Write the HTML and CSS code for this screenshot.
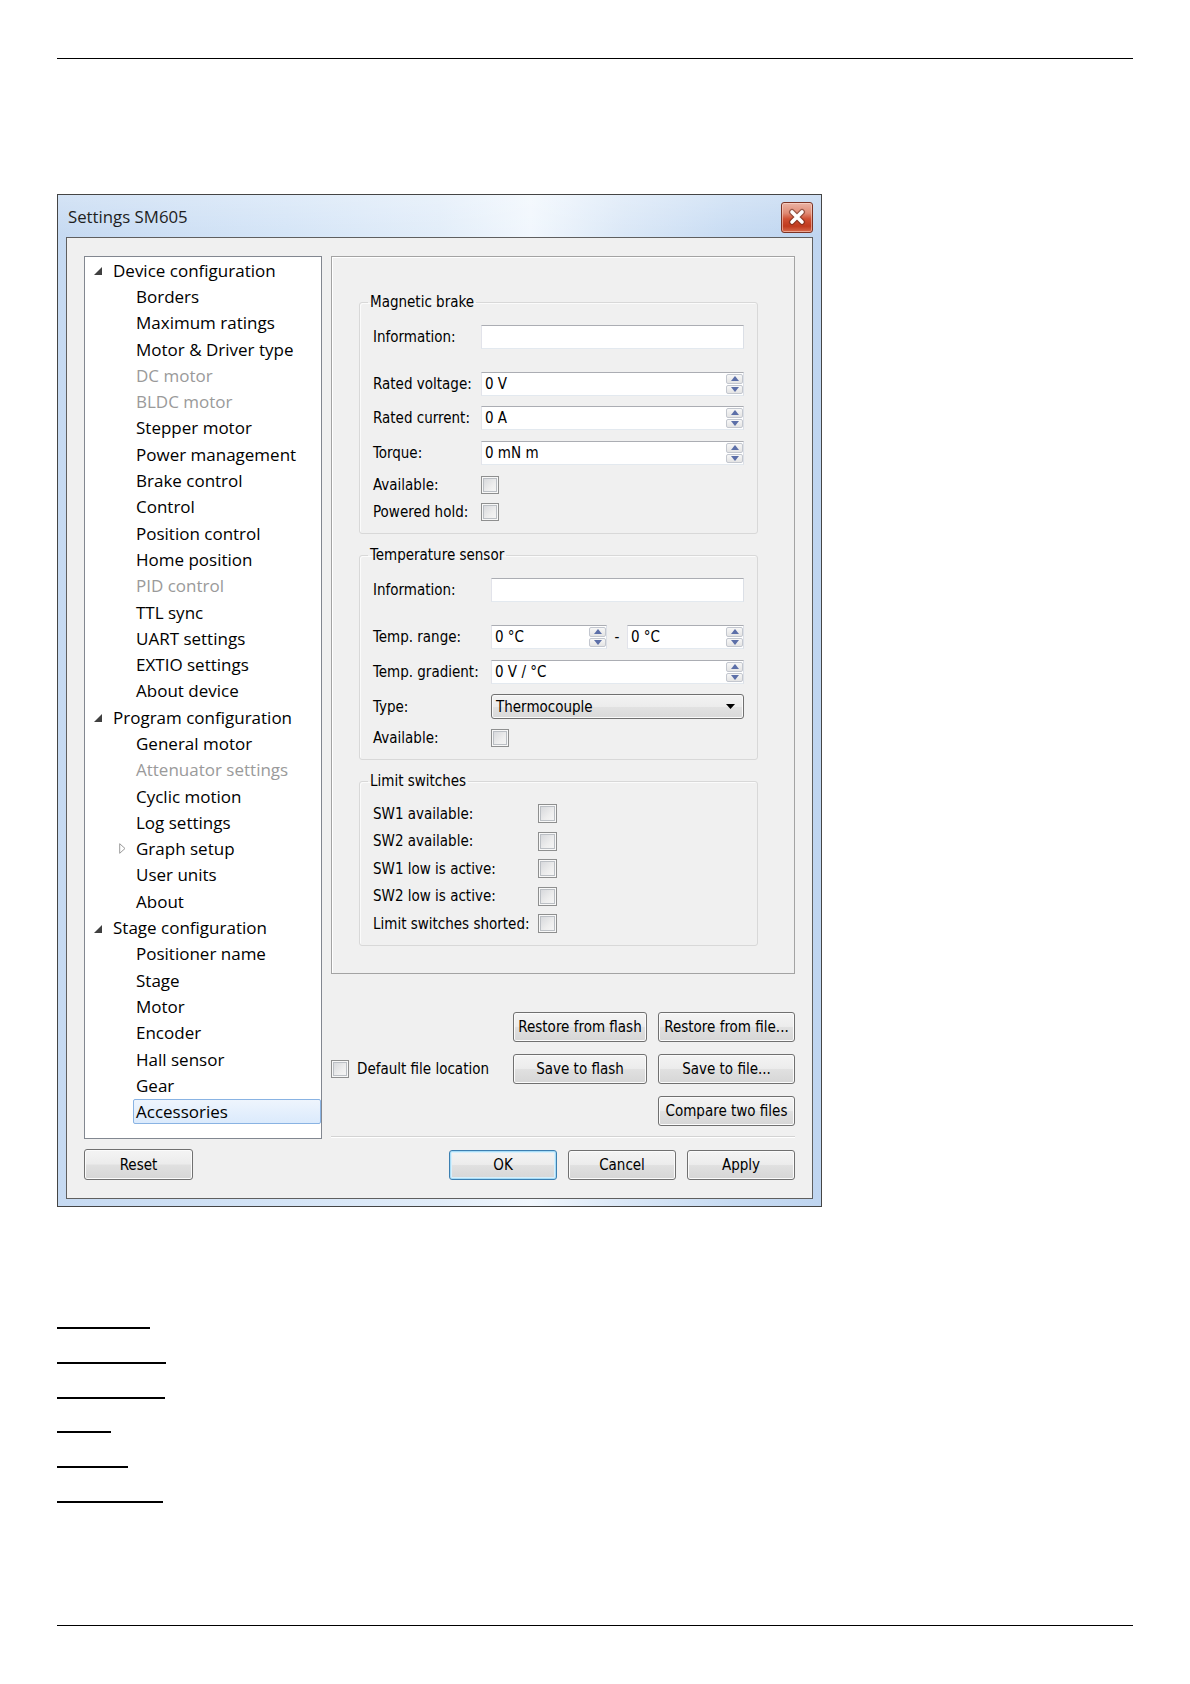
FILE: index.html
```html
<!DOCTYPE html>
<html>
<head>
<meta charset="utf-8">
<title>Settings SM605</title>
<link rel="stylesheet" href="styles.css">
</head>
<body>
<div class="page">
  <div class="rule rule-top"></div>

  <div class="dialog">
    <div class="titlebar">
      <span class="title">Settings SM605</span>
      <div class="close">
        <svg width="30" height="29" viewBox="0 0 30 29">
          <path d="M10 9 L20 19 M20 9 L10 19" stroke="#5a2418" stroke-width="6" stroke-linecap="round" fill="none" opacity="0.55"/>
          <path d="M10 9 L20 19 M20 9 L10 19" stroke="#ffffff" stroke-width="3.6" stroke-linecap="round" fill="none"/>
        </svg>
      </div>
    </div>

    <div class="frame">
      <div class="col-left">
        <div class="tree">
          <div class="ti top"><svg class="exp" width="8" height="8" viewBox="0 0 8 8"><polygon points="8,0 8,8 0,8" fill="#404040"/></svg><span>Device configuration</span></div>
          <div class="ti child">Borders</div>
          <div class="ti child">Maximum ratings</div>
          <div class="ti child">Motor &amp; Driver type</div>
          <div class="ti child dis">DC motor</div>
          <div class="ti child dis">BLDC motor</div>
          <div class="ti child">Stepper motor</div>
          <div class="ti child">Power management</div>
          <div class="ti child">Brake control</div>
          <div class="ti child">Control</div>
          <div class="ti child">Position control</div>
          <div class="ti child">Home position</div>
          <div class="ti child dis">PID control</div>
          <div class="ti child">TTL sync</div>
          <div class="ti child">UART settings</div>
          <div class="ti child">EXTIO settings</div>
          <div class="ti child">About device</div>
          <div class="ti top"><svg class="exp" width="8" height="8" viewBox="0 0 8 8"><polygon points="8,0 8,8 0,8" fill="#404040"/></svg><span>Program configuration</span></div>
          <div class="ti child">General motor</div>
          <div class="ti child dis">Attenuator settings</div>
          <div class="ti child">Cyclic motion</div>
          <div class="ti child">Log settings</div>
          <div class="ti child collapsed"><svg class="col" width="7" height="11" viewBox="0 0 7 11"><polygon points="0.7,0.7 6,5.5 0.7,10.3" fill="#fff" stroke="#9a9a9a" stroke-width="1"/></svg><span>Graph setup</span></div>
          <div class="ti child">User units</div>
          <div class="ti child">About</div>
          <div class="ti top"><svg class="exp" width="8" height="8" viewBox="0 0 8 8"><polygon points="8,0 8,8 0,8" fill="#404040"/></svg><span>Stage configuration</span></div>
          <div class="ti child">Positioner name</div>
          <div class="ti child">Stage</div>
          <div class="ti child">Motor</div>
          <div class="ti child">Encoder</div>
          <div class="ti child">Hall sensor</div>
          <div class="ti child">Gear</div>
          <div class="ti child sel"><span class="hl">Accessories</span></div>
        </div>
        <div class="btn reset">Reset</div>
      </div>

      <div class="col-right">
        <div class="panel">
          <fieldset class="group g-mag">
            <legend>Magnetic brake</legend>
            <div class="gbody">
              <div class="row r-info"><span class="lbl">Information:</span><div class="field"></div></div>
              <div class="row r-spin r-first"><span class="lbl">Rated voltage:</span><div class="field"><span class="val">0 V</span><div class="spin"><div class="sb"><svg width="8" height="5" viewBox="0 0 8 5"><polygon points="4,0 8,5 0,5" fill="#5c6fa8"/></svg></div><div class="sb"><svg width="8" height="5" viewBox="0 0 8 5"><polygon points="0,0 8,0 4,5" fill="#5c6fa8"/></svg></div></div></div></div>
              <div class="row r-spin"><span class="lbl">Rated current:</span><div class="field"><span class="val">0 A</span><div class="spin"><div class="sb"><svg width="8" height="5" viewBox="0 0 8 5"><polygon points="4,0 8,5 0,5" fill="#5c6fa8"/></svg></div><div class="sb"><svg width="8" height="5" viewBox="0 0 8 5"><polygon points="0,0 8,0 4,5" fill="#5c6fa8"/></svg></div></div></div></div>
              <div class="row r-spin"><span class="lbl">Torque:</span><div class="field"><span class="val">0 mN m</span><div class="spin"><div class="sb"><svg width="8" height="5" viewBox="0 0 8 5"><polygon points="4,0 8,5 0,5" fill="#5c6fa8"/></svg></div><div class="sb"><svg width="8" height="5" viewBox="0 0 8 5"><polygon points="0,0 8,0 4,5" fill="#5c6fa8"/></svg></div></div></div></div>
              <div class="row r-check"><span class="lbl">Available:</span><div class="cb"></div></div>
              <div class="row r-check r-check2"><span class="lbl">Powered hold:</span><div class="cb"></div></div>
            </div>
          </fieldset>

          <fieldset class="group g-temp">
            <legend>Temperature sensor</legend>
            <div class="gbody">
              <div class="row r-info"><span class="lbl">Information:</span><div class="field"></div></div>
              <div class="row r-spin r-first"><span class="lbl">Temp. range:</span>
                <div class="field f-range"><span class="val">0 °C</span><div class="spin"><div class="sb"><svg width="8" height="5" viewBox="0 0 8 5"><polygon points="4,0 8,5 0,5" fill="#5c6fa8"/></svg></div><div class="sb"><svg width="8" height="5" viewBox="0 0 8 5"><polygon points="0,0 8,0 4,5" fill="#5c6fa8"/></svg></div></div></div>
                <span class="dash">-</span>
                <div class="field"><span class="val">0 °C</span><div class="spin"><div class="sb"><svg width="8" height="5" viewBox="0 0 8 5"><polygon points="4,0 8,5 0,5" fill="#5c6fa8"/></svg></div><div class="sb"><svg width="8" height="5" viewBox="0 0 8 5"><polygon points="0,0 8,0 4,5" fill="#5c6fa8"/></svg></div></div></div>
              </div>
              <div class="row r-spin"><span class="lbl">Temp. gradient:</span><div class="field"><span class="val">0 V / °C</span><div class="spin"><div class="sb"><svg width="8" height="5" viewBox="0 0 8 5"><polygon points="4,0 8,5 0,5" fill="#5c6fa8"/></svg></div><div class="sb"><svg width="8" height="5" viewBox="0 0 8 5"><polygon points="0,0 8,0 4,5" fill="#5c6fa8"/></svg></div></div></div></div>
              <div class="row r-combo"><span class="lbl">Type:</span><div class="combo"><span class="val">Thermocouple</span><svg width="9" height="5" viewBox="0 0 9 5"><polygon points="0,0 9,0 4.5,5" fill="#000"/></svg></div></div>
              <div class="row r-check"><span class="lbl">Available:</span><div class="cb"></div></div>
            </div>
          </fieldset>

          <fieldset class="group g-limit">
            <legend>Limit switches</legend>
            <div class="gbody">
              <div class="row r-sw"><span class="lbl">SW1 available:</span><div class="cb"></div></div>
              <div class="row r-sw"><span class="lbl">SW2 available:</span><div class="cb"></div></div>
              <div class="row r-sw"><span class="lbl">SW1 low is active:</span><div class="cb"></div></div>
              <div class="row r-sw"><span class="lbl">SW2 low is active:</span><div class="cb"></div></div>
              <div class="row r-sw"><span class="lbl">Limit switches shorted:</span><div class="cb"></div></div>
            </div>
          </fieldset>
        </div>

        <div class="file-grid">
          <div class="empty"></div>
          <div class="btn">Restore from flash</div>
          <div class="btn">Restore from file...</div>
          <div class="defloc"><div class="cb"></div><span>Default file location</span></div>
          <div class="btn">Save to flash</div>
          <div class="btn">Save to file...</div>
          <div class="empty"></div>
          <div class="empty"></div>
          <div class="btn">Compare two files</div>
        </div>

        <div class="sep"></div>

        <div class="dlg-buttons">
          <div class="btn wide default">OK</div>
          <div class="btn wide">Cancel</div>
          <div class="btn wide">Apply</div>
        </div>
      </div>
    </div>
  </div>

  <div class="links">
    <div class="uline" style="width:93px"></div>
    <div class="uline" style="width:109px"></div>
    <div class="uline" style="width:108px"></div>
    <div class="uline" style="width:54px"></div>
    <div class="uline" style="width:71px"></div>
    <div class="uline" style="width:106px"></div>
  </div>

  <div class="rule rule-bottom"></div>
</div>
</body>
</html>
```

FILE: styles.css
```css
* { box-sizing: border-box; }

html, body {
  margin: 0;
  padding: 0;
  background: #ffffff;
}

.page {
  width: 1190px;
  height: 1684px;
  overflow: hidden;
  padding-top: 58px;
  font-family: "DejaVu Sans Condensed", "DejaVu Sans", sans-serif;
  font-stretch: semi-condensed;
  font-size: 15px;
  color: #000;
}

.rule {
  margin: 0 57px;
  height: 1px;
  background: #000;
}

.rule-bottom {
  margin-top: 122px;
}

/* ---------- dialog ---------- */

.dialog {
  margin: 135px 0 0 57px;
  width: 765px;
  height: 1013px;
  border: 1px solid #454545;
  background:
    linear-gradient(to bottom, rgba(255,255,255,0.25), rgba(255,255,255,0) 40px),
    linear-gradient(to right, #c6daf2 0%, #d5e5f7 30%, #e2edf9 50%, #f1f7fd 62%, #dbe8f7 74%, #c8dcf3 88%, #bfd5f0 100%);
  display: flex;
  flex-direction: column;
}

.titlebar {
  height: 42px;
  flex: none;
  display: flex;
  align-items: center;
  justify-content: space-between;
  padding: 0 8px 0 10px;
}

.title {
  font-family: "Open Sans", "Noto Sans", sans-serif;
  font-stretch: normal;
  font-size: 16.8px;
  color: #1e1e1e;
  margin-top: 1px;
}

.close {
  width: 32px;
  height: 31px;
  margin-top: 3px;
  border: 1px solid #7b3325;
  border-radius: 3px;
  background: linear-gradient(to bottom, #eab3a5 0%, #e08a74 35%, #cf4f33 55%, #c03a1e 80%, #d86a4c 100%);
  box-shadow: inset 0 0 0 1px rgba(255,220,210,0.55);
  display: flex;
  align-items: center;
  justify-content: center;
}

.frame {
  margin: 0 8px;
  height: 962px;
  border: 1px solid #5f5f5f;
  background: #f0f0f0;
  padding: 18px 17px;
  display: flex;
  gap: 9px;
}

.col-left {
  width: 238px;
  flex: none;
  display: flex;
  flex-direction: column;
  gap: 10px;
}

.col-right {
  width: 464px;
  flex: none;
  display: flex;
  flex-direction: column;
}

/* ---------- tree ---------- */

.tree {
  height: 883px;
  background: #ffffff;
  border: 1px solid #828790;
  font-family: "Open Sans", "Noto Sans", sans-serif;
  font-stretch: normal;
  font-size: 17px;
  color: #000;
  padding-top: 0;
}

.ti {
  height: 26.3px;
  display: flex;
  align-items: center;
  white-space: nowrap;
}

.ti.top {
  padding-left: 9px;
}

.ti.top .exp {
  margin-right: 11px;
  margin-top: 2px;
  flex: none;
}

.ti.child {
  padding-left: 51px;
}

.ti.collapsed {
  padding-left: 34px;
}

.ti.collapsed .col {
  margin-right: 10px;
  flex: none;
}

.ti.dis {
  color: #9a9a9a;
}

.ti.sel {
  padding-left: 48px;
}

.hl {
  flex: 1;
  height: 25px;
  margin-top: 0;
  padding-left: 2px;
  display: flex;
  align-items: center;
  border: 1px solid #89b3e3;
  border-radius: 2px;
  background: linear-gradient(to bottom, #eef5fd 0%, #dbeafc 100%);
}

/* ---------- right panel ---------- */

.panel {
  height: 718px;
  border: 1px solid #a3a3a3;
  box-shadow: inset 1px 1px 0 #ffffff;
  padding: 36px 36px 0 27px;
}

.group {
  margin: 0;
  padding: 0 13px 12px;
  border: 1px solid #d8d8d8;
  border-radius: 3px;
  box-shadow: inset 1px 1px 0 #fbfbfb;
  min-width: 0;
}

.group + .group {
  margin-top: 12px;
}

.group legend {
  margin-left: -5px;
  padding: 0 2px;
  line-height: 18px;
  height: 18px;
  color: #000;
}

.gbody {
  padding-top: 14px;
  display: flex;
  flex-direction: column;
}

.row {
  display: flex;
  align-items: center;
}

.lbl {
  flex: none;
  white-space: nowrap;
}

.g-mag .lbl { width: 108px; }
.g-temp .lbl { width: 118px; }
.g-limit .lbl { width: 165px; }

.r-info { height: 24px; }
.r-spin { height: 24px; margin-top: 10px; }
.r-spin.r-first { margin-top: 23px; }
.g-mag .r-spin + .r-spin + .r-spin { margin-top: 11px; }
.g-temp .r-spin + .r-spin { margin-top: 11px; }
.r-combo { height: 25px; margin-top: 10px; }
.r-check { height: 18px; margin-top: 11px; }
.r-check.r-check2 { margin-top: 9px; }
.g-temp .r-check { margin-top: 10px; }
.r-sw { height: 19px; margin-top: 8.5px; }
.r-sw:first-child { margin-top: 0; }

.field {
  flex: 1;
  align-self: stretch;
  min-width: 0;
  background: #ffffff;
  border: 1px solid #e3e9ef;
  border-top-color: #abadb3;
  border-left-color: #e2e3ea;
  border-right-color: #dbdfe6;
  display: flex;
  align-items: center;
}

.field.f-range {
  flex: none;
  width: 116px;
}

.val {
  flex: 1;
  padding-left: 3px;
  white-space: nowrap;
}

.spin {
  width: 17px;
  align-self: stretch;
  display: flex;
  flex-direction: column;
  gap: 1px;
  padding: 1px 0 1px 0;
}

.sb {
  flex: 1;
  border: 1px solid #c3c7cf;
  border-radius: 2px;
  background: linear-gradient(to bottom, #f7f7f7 0%, #e4e4e4 100%);
  display: flex;
  align-items: center;
  justify-content: center;
}

.dash {
  width: 20px;
  text-align: center;
  flex: none;
}

.combo {
  flex: 1;
  align-self: stretch;
  border: 1px solid #707070;
  border-radius: 3px;
  background: linear-gradient(to bottom, #f3f3f3 0%, #ececec 50%, #e2e2e2 51%, #d9d9d9 100%);
  box-shadow: inset 0 0 0 1px #fafafa;
  display: flex;
  align-items: center;
  padding: 0 8px 0 1px;
}

.cb {
  width: 19px;
  height: 19px;
  flex: none;
  border: 1px solid #8e8f8f;
  background: linear-gradient(135deg, #d2d4d8 0%, #eeeeee 60%, #f7f7f7 100%);
  box-shadow: inset 0 0 0 1px #f8f8f8, inset 0 0 0 2px #bbbfc4;
}

.r-check .cb { width: 18px; height: 18px; }

/* ---------- buttons ---------- */

.btn {
  height: 30px;
  border: 1px solid #707070;
  border-radius: 3px;
  background: linear-gradient(to bottom, #f4f4f4 0%, #ececec 48%, #e0e0e0 52%, #d6d6d6 100%);
  box-shadow: inset 0 0 0 1px #fbfbfb;
  display: flex;
  align-items: center;
  justify-content: center;
  white-space: nowrap;
  color: #000;
}

.reset {
  width: 109px;
  height: 31px;
}

.file-grid {
  margin-top: 38px;
  display: grid;
  grid-template-columns: 1fr 134px 137px;
  grid-auto-rows: 30px;
  column-gap: 11px;
  row-gap: 12px;
}

.defloc {
  display: flex;
  align-items: center;
  gap: 8px;
  white-space: nowrap;
}

.defloc .cb { width: 18px; height: 18px; }

.sep {
  margin-top: 10px;
  height: 2px;
  border-top: 1px solid #d3d3d3;
  border-bottom: 1px solid #ffffff;
}

.dlg-buttons {
  margin-top: 12px;
  display: flex;
  justify-content: flex-end;
  gap: 11px;
}

.btn.wide {
  width: 108px;
}

.btn.default {
  border-color: #3c7fb1;
  box-shadow: inset 0 0 0 1px #a7dcf6, inset 0 0 0 2px #d8effb;
}

/* ---------- bottom underlines ---------- */

.links {
  margin: 120px 0 0 57px;
  display: flex;
  flex-direction: column;
  gap: 32.8px;
}

.uline {
  height: 2px;
  background: #000;
}
```
